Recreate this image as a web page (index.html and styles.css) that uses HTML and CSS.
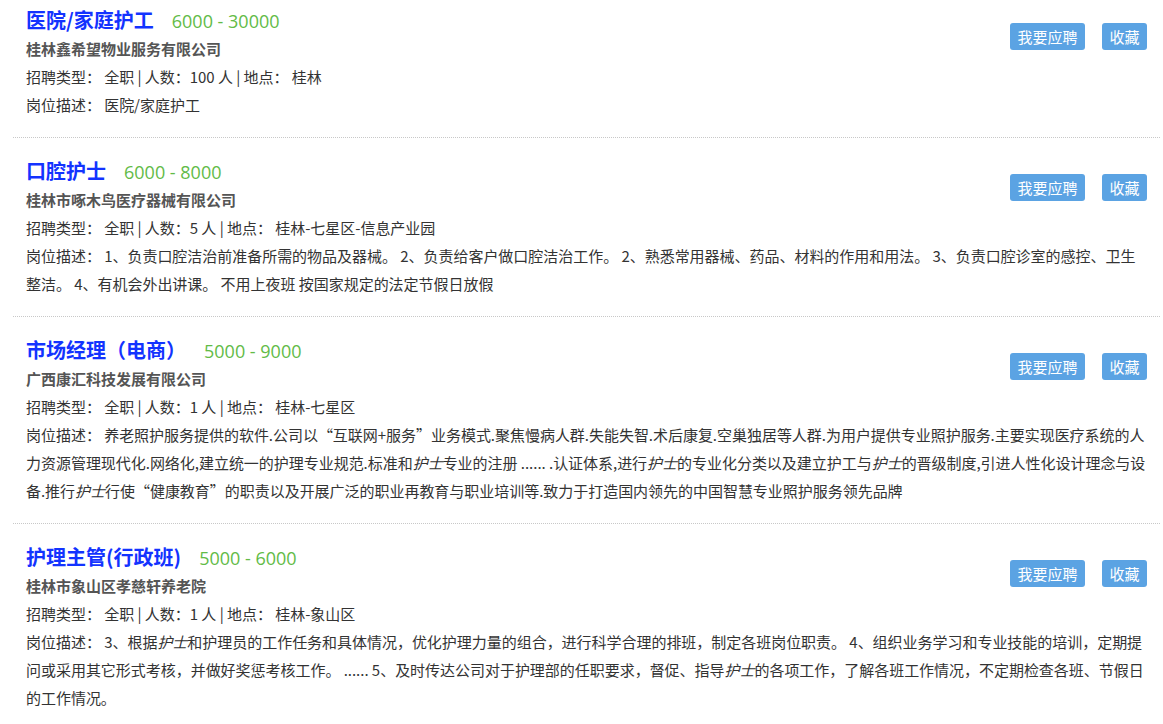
FILE: index.html
```html
<!DOCTYPE html>
<html lang="zh-CN">
<head>
  <meta charset="UTF-8">
  <title>招聘信息</title>
  <link rel="stylesheet" href="styles.css">
</head>
<body>
  <div class="job-list">

    <div class="job">
      <div class="job-btns">
        <a class="btn" href="#">我要应聘</a>
        <a class="btn" href="#">收藏</a>
      </div>
      <div class="job-head">
        <a class="job-title" href="#">医院/家庭护工</a><span class="salary">6000 - 30000</span>
      </div>
      <div class="company">桂林鑫希望物业服务有限公司</div>
      <div class="info">招聘类型： 全职 | 人数：100 人 | 地点： 桂林</div>
      <div class="info">岗位描述： 医院/家庭护工</div>
    </div>

    <div class="job">
      <div class="job-btns">
        <a class="btn" href="#">我要应聘</a>
        <a class="btn" href="#">收藏</a>
      </div>
      <div class="job-head">
        <a class="job-title" href="#">口腔护士</a><span class="salary">6000 - 8000</span>
      </div>
      <div class="company">桂林市啄木鸟医疗器械有限公司</div>
      <div class="info">招聘类型： 全职 | 人数：5 人 | 地点： 桂林-七星区-信息产业园</div>
      <div class="info">岗位描述： 1、负责口腔洁治前准备所需的物品及器械。 2、负责给客户做口腔洁治工作。 2、熟悉常用器械、药品、材料的作用和用法。 3、负责口腔诊室的感控、卫生整洁。 4、有机会外出讲课。 不用上夜班 按国家规定的法定节假日放假</div>
    </div>

    <div class="job">
      <div class="job-btns">
        <a class="btn" href="#">我要应聘</a>
        <a class="btn" href="#">收藏</a>
      </div>
      <div class="job-head">
        <a class="job-title" href="#">市场经理（电商）</a><span class="salary">5000 - 9000</span>
      </div>
      <div class="company">广西康汇科技发展有限公司</div>
      <div class="info">招聘类型： 全职 | 人数：1 人 | 地点： 桂林-七星区</div>
      <div class="info">岗位描述： 养老照护服务提供的软件.公司以“互联网+服务”业务模式.聚焦慢病人群.失能失智.术后康复.空巢独居等人群.为用户提供专业照护服务.主要实现医疗系统的人力资源管理现代化.网络化,建立统一的护理专业规范.标准和<i>护士</i>专业的注册 ...... .认证体系,进行<i>护士</i>的专业化分类以及建立护工与<i>护士</i>的晋级制度,引进人性化设计理念与设备.推行<i>护士</i>行使“健康教育”的职责以及开展广泛的职业再教育与职业培训等.致力于打造国内领先的中国智慧专业照护服务领先品牌</div>
    </div>

    <div class="job">
      <div class="job-btns">
        <a class="btn" href="#">我要应聘</a>
        <a class="btn" href="#">收藏</a>
      </div>
      <div class="job-head">
        <a class="job-title" href="#">护理主管(行政班)</a><span class="salary">5000 - 6000</span>
      </div>
      <div class="company">桂林市象山区孝慈轩养老院</div>
      <div class="info">招聘类型： 全职 | 人数：1 人 | 地点： 桂林-象山区</div>
      <div class="info">岗位描述： 3、根据<i>护士</i>和护理员的工作任务和具体情况，优化护理力量的组合，进行科学合理的排班，制定各班岗位职责。 4、组织业务学习和专业技能的培训，定期提问或采用其它形式考核，并做好奖惩考核工作。 ...... 5、及时传达公司对于护理部的任职要求，督促、指导<i>护士</i>的各项工作，了解各班工作情况，不定期检查各班、节假日的工作情况。</div>
    </div>

  </div>
</body>
</html>
```

FILE: styles.css
```css
* { box-sizing: border-box; }

body {
  margin: 0;
  font-family: 'Noto Sans CJK SC', 'Noto Sans', sans-serif;
  font-size: 15px;
  color: #333;
  background: #fff;
}

a { text-decoration: none; }

.job-list {
  margin: 0 3px 0 13px;
}

.job {
  padding: 18px 13px 18px;
  border-bottom: 1px dotted #c8c8c8;
}

.job:first-child {
  padding-top: 5px;
}

.job-btns {
  float: right;
  display: flex;
  gap: 17px;
  margin-top: 18px;
}

.btn {
  display: block;
  height: 27px;
  line-height: 27px;
  padding: 0 7.5px;
  background: #5ba3e3;
  color: #fff;
  font-size: 15px;
  border-radius: 3px;
}

.job-head {
  height: 30px;
  line-height: 30px;
}

.job-title {
  font-size: 20px;
  font-weight: bold;
  color: #1333ff;
}

.salary {
  margin-left: 18px;
  font-family: 'Open Sans', 'Noto Sans CJK SC', sans-serif;
  font-size: 18px;
  color: #62bb47;
}

.company {
  line-height: 28px;
  font-weight: bold;
  color: #555;
}

.info {
  line-height: 28px;
  letter-spacing: -0.03px;
}

.info i {
  font-style: italic;
}
```
